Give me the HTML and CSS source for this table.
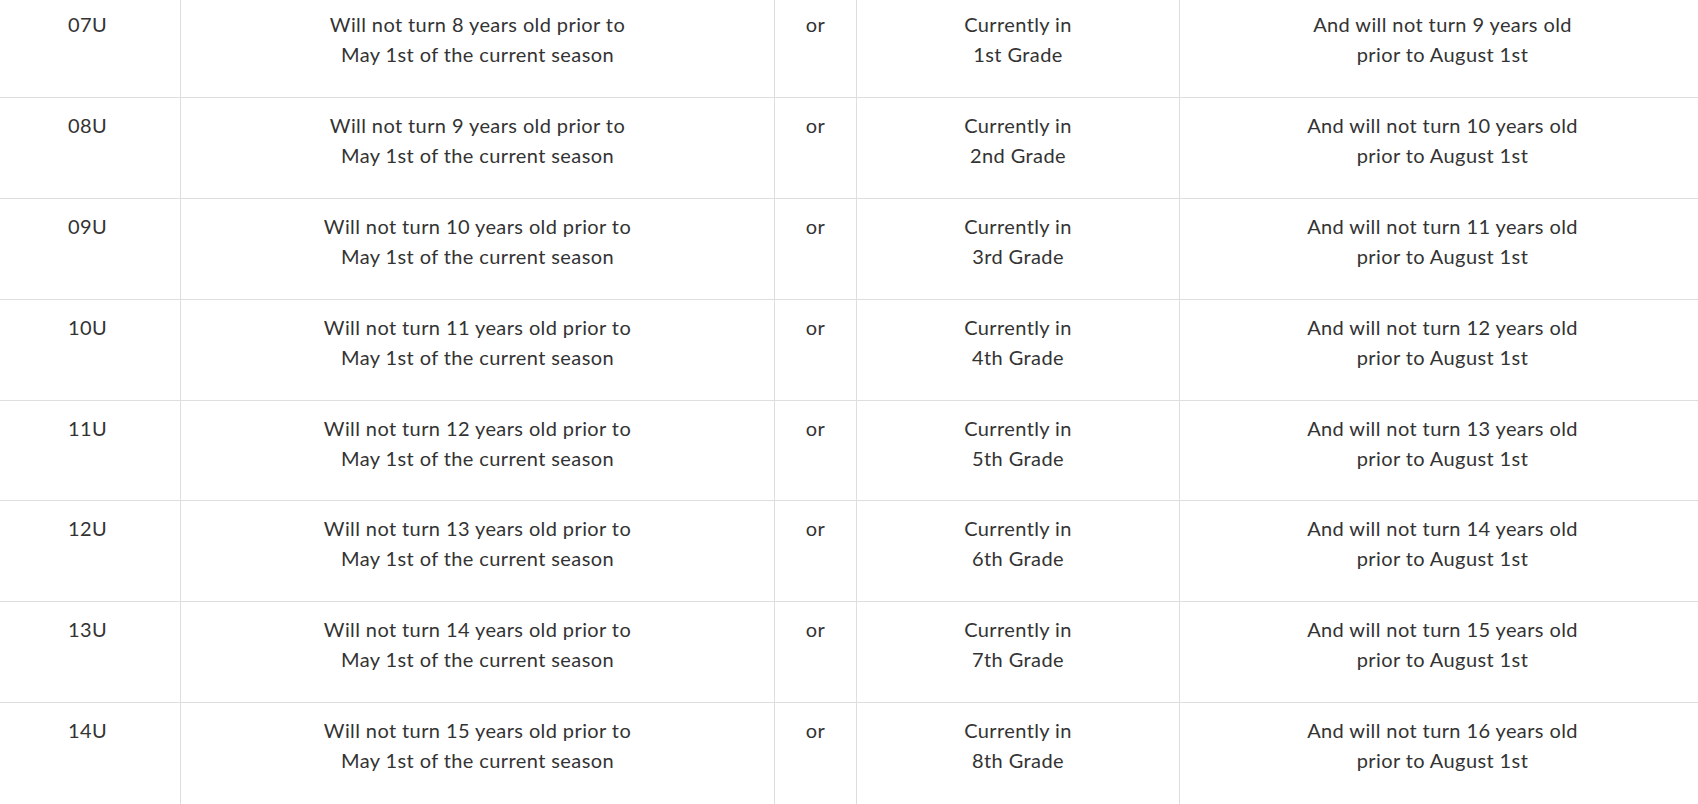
FILE: index.html
```html
<!DOCTYPE html>
<html lang="en">
<head>
<meta charset="utf-8">
<title>Age Divisions</title>
<link rel="stylesheet" href="styles.css">
</head>
<body>
<div class="table">
  <div class="row"><div class="cell">07U</div><div class="cell">Will not turn 8 years old prior to<br>May 1st of the current season</div><div class="cell">or</div><div class="cell">Currently in<br>1st Grade</div><div class="cell">And will not turn 9 years old<br>prior to August 1st</div></div>
  <div class="row"><div class="cell">08U</div><div class="cell">Will not turn 9 years old prior to<br>May 1st of the current season</div><div class="cell">or</div><div class="cell">Currently in<br>2nd Grade</div><div class="cell">And will not turn 10 years old<br>prior to August 1st</div></div>
  <div class="row"><div class="cell">09U</div><div class="cell">Will not turn 10 years old prior to<br>May 1st of the current season</div><div class="cell">or</div><div class="cell">Currently in<br>3rd Grade</div><div class="cell">And will not turn 11 years old<br>prior to August 1st</div></div>
  <div class="row"><div class="cell">10U</div><div class="cell">Will not turn 11 years old prior to<br>May 1st of the current season</div><div class="cell">or</div><div class="cell">Currently in<br>4th Grade</div><div class="cell">And will not turn 12 years old<br>prior to August 1st</div></div>
  <div class="row"><div class="cell">11U</div><div class="cell">Will not turn 12 years old prior to<br>May 1st of the current season</div><div class="cell">or</div><div class="cell">Currently in<br>5th Grade</div><div class="cell">And will not turn 13 years old<br>prior to August 1st</div></div>
  <div class="row"><div class="cell">12U</div><div class="cell">Will not turn 13 years old prior to<br>May 1st of the current season</div><div class="cell">or</div><div class="cell">Currently in<br>6th Grade</div><div class="cell">And will not turn 14 years old<br>prior to August 1st</div></div>
  <div class="row"><div class="cell">13U</div><div class="cell">Will not turn 14 years old prior to<br>May 1st of the current season</div><div class="cell">or</div><div class="cell">Currently in<br>7th Grade</div><div class="cell">And will not turn 15 years old<br>prior to August 1st</div></div>
  <div class="row"><div class="cell">14U</div><div class="cell">Will not turn 15 years old prior to<br>May 1st of the current season</div><div class="cell">or</div><div class="cell">Currently in<br>8th Grade</div><div class="cell">And will not turn 16 years old<br>prior to August 1st</div></div>
</div>
</body>
</html>
```

FILE: styles.css
```css
html, body {
  margin: 0;
  padding: 0;
  background: #ffffff;
  overflow: hidden;
}
body {
  font-family: "Lato", "Noto Sans", sans-serif;
  font-size: 20px;
  line-height: 30px;
  letter-spacing: 0.4px;
  color: #333333;
}
.table {
  width: 1710px;
  margin-left: -5px;
  margin-top: -2.6px;
}
.row {
  display: grid;
  grid-template-columns: 185px 594px 82px 323px 526px;
  height: 100.8px;
  box-sizing: border-box;
  border-bottom: 1px solid #dedede;
}
.row:last-child {
  border-bottom: none;
}
.cell {
  box-sizing: border-box;
  padding: 12px 8px 0;
  text-align: center;
  border-left: 1px solid #dedede;
}
.cell:first-child {
  border-left: none;
}
```
